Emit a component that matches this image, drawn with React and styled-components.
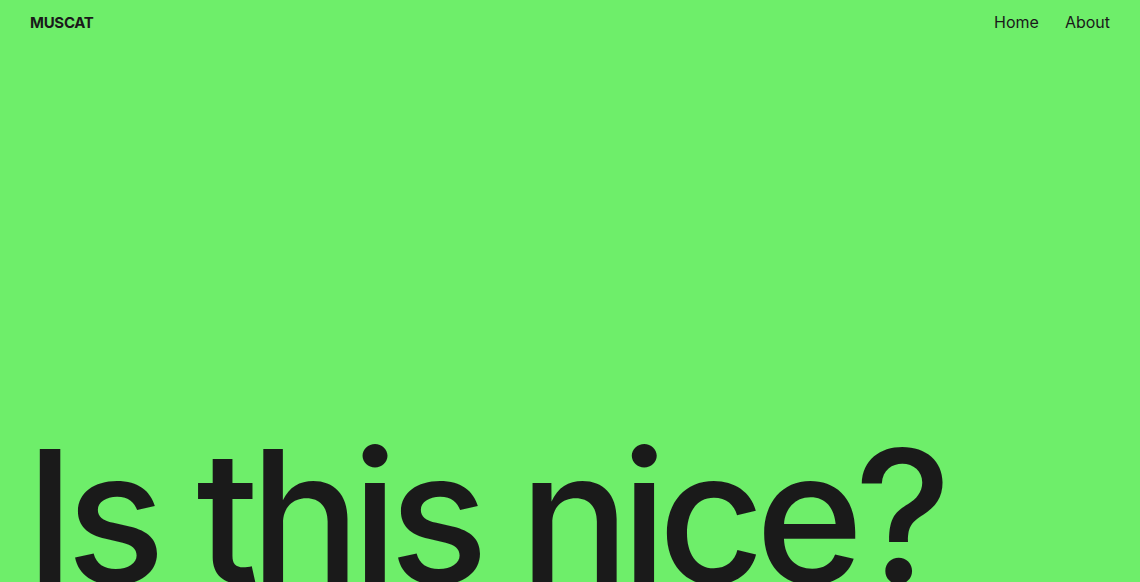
import React from 'react'
import styled, { createGlobalStyle } from 'styled-components'

const GlobalStyle = createGlobalStyle`
  html, body {
    margin: 0;
    padding: 0;
    background: #6eee6a;
  }
  body {
    font-family: Inter, "Noto Sans", sans-serif;
    color: #1a1a1a;
  }
`

const Page = styled.div`
  display: flex;
  flex-direction: column;
  width: 100vw;
  height: 100vh;
  overflow: hidden;
  background: #6eee6a;
`

const Header = styled.header`
  display: flex;
  justify-content: space-between;
  align-items: center;
  padding: 11px 30px 0 30px;
  height: 22px;
`

const Logo = styled.div`
  font-size: 15px;
  font-weight: 700;
  letter-spacing: -0.3px;
`

const Nav = styled.nav`
  display: flex;
  gap: 26px;
`

const NavLink = styled.a`
  font-size: 16px;
  font-weight: 400;
  color: #1a1a1a;
  text-decoration: none;
`

const Hero = styled.main`
  flex: 1;
  display: flex;
  align-items: flex-end;
  padding: 0 25px;
`

// the headline runs past the bottom edge of the window, as in the design
const Title = styled.h1`
  margin: 0 0 -26px 0;
  font-size: 184px;
  font-weight: 500;
  letter-spacing: -9px;
  line-height: 1;
  white-space: nowrap;
`

const App = () => {
  return (
    <Page>
      <GlobalStyle />
      <Header>
        <Logo>MUSCAT</Logo>
        <Nav>
          <NavLink href="#">Home</NavLink>
          <NavLink href="#">About</NavLink>
        </Nav>
      </Header>
      <Hero>
        <Title>Is this nice?</Title>
      </Hero>
    </Page>
  )
}

export default App
